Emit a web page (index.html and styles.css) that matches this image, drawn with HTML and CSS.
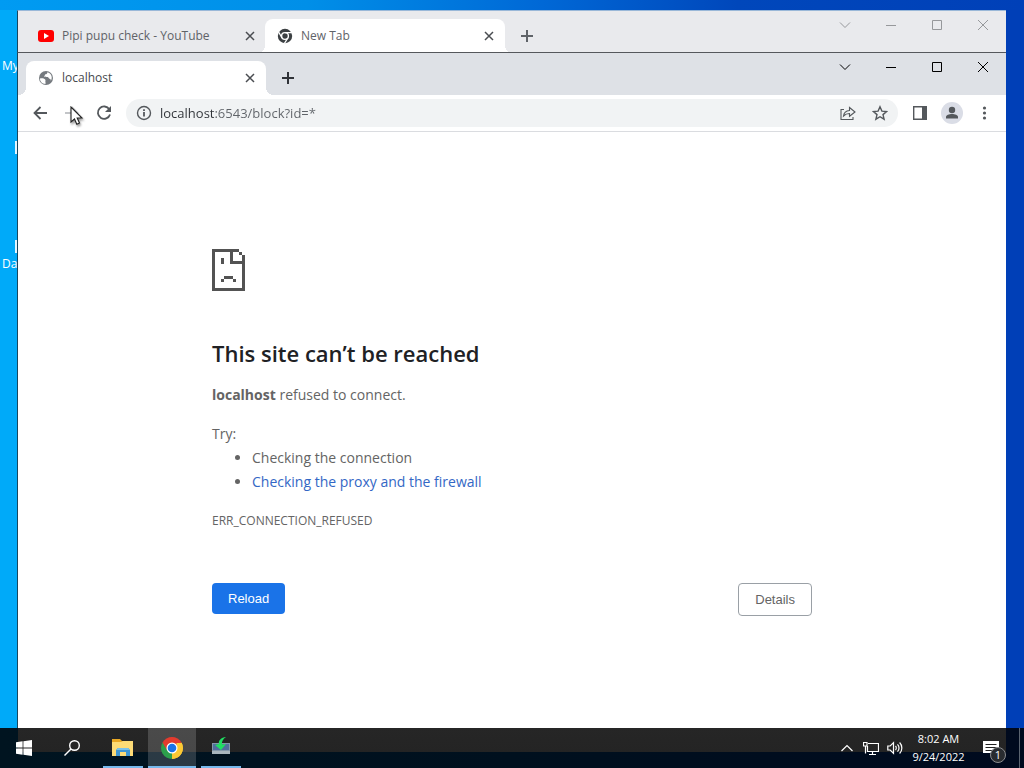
FILE: index.html
```html
<!DOCTYPE html>
<html lang="en">
<head>
<meta charset="utf-8">
<title>localhost</title>
<link rel="stylesheet" href="styles.css">
</head>
<body>
<div class="desktop">
  <div class="desktop-item item-my"><span class="desktop-label">My</span></div>
  <div class="desktop-item item-edge"><span class="shortcut"></span></div>
  <div class="desktop-item item-da"><span class="shortcut"></span><span class="desktop-label">Da</span></div>

  <section class="window window-back" aria-label="New Tab">
    <div class="tabstrip">
      <div class="tab">
        <svg class="favicon" viewBox="0 0 16 16"><rect y="2" width="16" height="12" rx="3" fill="#f00"/><path d="M6 5v6l5-3z" fill="#fff"/></svg>
        <span class="tab-title">Pipi pupu check - YouTube</span>
        <button class="tab-close" aria-label="Close tab"><svg viewBox="0 0 10 10"><path d="M1 1l8 8M9 1l-8 8"/></svg></button>
      </div>
      <div class="tab tab-active">
        <svg class="favicon" viewBox="0 0 16 16"><circle cx="8" cy="8" r="7.2" fill="#3c4043"/><circle cx="8" cy="8" r="3.4" fill="#3c4043" stroke="#fff" stroke-width="1.4"/><path d="M8 4.600h7M5 9.800L1.600 4M10.800 10L7.300 15.600" stroke="#fff" stroke-width="1.300"/></svg>
        <span class="tab-title">New Tab</span>
        <button class="tab-close" aria-label="Close tab"><svg viewBox="0 0 10 10"><path d="M1 1l8 8M9 1l-8 8"/></svg></button>
      </div>
      <button class="new-tab" aria-label="New tab"><svg viewBox="0 0 12 12"><path d="M6 0v12M0 6h12"/></svg></button>
      <div class="controls">
        <button aria-label="Search tabs"><svg viewBox="0 0 12 12"><path d="M1 3.500l5 5 5-5"/></svg></button>
        <button aria-label="Minimize"><svg viewBox="0 0 12 12"><path d="M1 6.500h10"/></svg></button>
        <button aria-label="Maximize"><svg viewBox="0 0 12 12"><path d="M1.500 1.500h9v9h-9z"/></svg></button>
        <button aria-label="Close"><svg viewBox="0 0 12 12"><path d="M1 1l10 10M11 1L1 11"/></svg></button>
      </div>
    </div>
  </section>

  <section class="window window-front" aria-label="localhost">
    <div class="tabstrip">
      <div class="tab tab-active">
        <svg class="favicon" viewBox="0 0 16 16"><circle cx="8" cy="8" r="7" fill="#757a7f"/><path d="M2 8.400c2-.6 4-.2 5.200 1.100.8.900-.2 1.700.3 2.700v1.700C4 13.800 1.800 11 2 8.400zM9.300 2.200c.1 1.500-.8 2-1.800 2.100-.8.100-.4 1.600-1.500 1.900.6 1 2.600.3 3.800.9 1 .5.700 1.600 2.200 1.800.8.100 1 1 .7 2C15 7.500 13.500 3.300 9.300 2.200z" fill="#fff"/></svg>
        <span class="tab-title">localhost</span>
        <button class="tab-close" aria-label="Close tab"><svg viewBox="0 0 10 10"><path d="M1 1l8 8M9 1l-8 8"/></svg></button>
      </div>
      <button class="new-tab" aria-label="New tab"><svg viewBox="0 0 12 12"><path d="M6 0v12M0 6h12"/></svg></button>
      <div class="controls">
        <button aria-label="Search tabs"><svg viewBox="0 0 12 12"><path d="M1 3.500l5 5 5-5"/></svg></button>
        <button aria-label="Minimize"><svg viewBox="0 0 12 12"><path d="M1 6.500h10"/></svg></button>
        <button aria-label="Maximize"><svg viewBox="0 0 12 12"><path d="M1.500 1.500h9v9h-9z"/></svg></button>
        <button aria-label="Close"><svg viewBox="0 0 12 12"><path d="M1 1l10 10M11 1L1 11"/></svg></button>
      </div>
    </div>

    <div class="toolbar">
      <button class="tool" aria-label="Back"><svg viewBox="0 0 16 16"><path d="M15 8H2.500M8.500 2L2.500 8l6 6"/></svg></button>
      <button class="tool tool-disabled" aria-label="Forward" disabled><svg viewBox="0 0 16 16"><path d="M1 8h12.500M7.500 2l6 6-6 6"/></svg></button>
      <button class="tool" aria-label="Reload page"><svg viewBox="0 0 16 16"><path d="M13.300 4.300A6.200 6.200 0 1 0 14 9.500"/><path d="M15 1v6H9z" class="solid"/></svg></button>
      <div class="omnibox">
        <button class="tool" aria-label="Site information"><svg viewBox="0 0 16 16"><circle cx="8" cy="8" r="6.500" class="thin"/><path d="M8 7v4.500M8 4.300v1.600"/></svg></button>
        <input class="url" type="text" aria-label="Address" value="localhost:6543/block?id=*">
        <button class="tool" aria-label="Share"><svg viewBox="0 0 16 16"><path class="fine" d="M4 4.500H1v10h12V12M3.500 11c.4-3.300 2.300-5.200 6-5.500V2.500L15 7l-5.500 4.300V8.500c-2.500 0-4.400.8-6 2.500z"/></svg></button>
        <button class="tool" aria-label="Bookmark this tab"><svg viewBox="0 0 16 16"><path class="thin" d="M8 1.800l1.900 4.300 4.700.4-3.600 3.100 1.100 4.600L8 11.700l-4.100 2.500L5 9.600 1.400 6.500l4.700-.4z"/></svg></button>
      </div>
      <button class="tool" aria-label="Side panel"><svg viewBox="0 0 16 16"><path class="thin" d="M1.700 1.700h12.600v12.600H1.700z"/><path class="solid" d="M10 1h5v14h-5z"/></svg></button>
      <button class="tool avatar" aria-label="Profile"><svg viewBox="0 0 16 16"><circle class="solid" cx="8" cy="5" r="3.200"/><path class="solid" d="M2 13.500V12c0-4 12-4 12 0v1.500z"/></svg></button>
      <button class="tool" aria-label="Menu"><svg viewBox="0 0 16 16"><circle class="solid" cx="8.500" cy="3" r="1.600"/><circle class="solid" cx="8.500" cy="8" r="1.600"/><circle class="solid" cx="8.500" cy="13" r="1.600"/></svg></button>
    </div>

    <main class="page">
      <div class="error">
        <svg class="error-icon" viewBox="0 0 11 14" shape-rendering="crispEdges" aria-hidden="true"><path fill="#535353" d="M0 0h9v1H1v12h9V5H6V1h1v3h3V2h1v12H0zM9 1h1v1H9zM3 3h1v2H3zM4 9h3v1H4zM3 10h1v1H3zM7 10h1v1H7z"/></svg>
        <h1>This site can’t be reached</h1>
        <p><strong>localhost</strong> refused to connect.</p>
        <div class="suggestions">
          <p>Try:</p>
          <ul>
            <li>Checking the connection</li>
            <li><a href="#buttons">Checking the proxy and the firewall</a></li>
          </ul>
        </div>
        <div class="error-code">ERR_CONNECTION_REFUSED</div>
        <div class="buttons" id="buttons">
          <button class="reload">Reload</button>
          <button class="details">Details</button>
        </div>
      </div>
    </main>
  </section>

  <svg class="cursor" viewBox="0 0 14 20" aria-hidden="true"><path d="M1 1v15l3.500-3 2.300 5.200 2.700-1.200-2.300-5h4.800z" fill="#fff" stroke="#222" stroke-width="1.100"/></svg>
</div>

<footer class="taskbar">
  <button class="task" aria-label="Start"><svg class="icon-16" viewBox="0 0 16 16"><path fill="#fff" d="M0 2.200L6.600 1.300v6.300H0zM7.400 1.200L16 0v7.600H7.400zM0 8.400h6.600v6.300L0 13.800zM7.400 8.400H16V16l-8.600-1.200z"/></svg></button>
  <button class="task" aria-label="Search"><svg class="icon-16" viewBox="0 0 16 16"><g fill="none" stroke="#fff" stroke-width="1.400"><circle cx="10.500" cy="5.500" r="4.800"/><path d="M7 9L.5 15.500"/></g></svg></button>
  <div class="apps">
    <button class="task task-open" aria-label="File Explorer"><svg class="icon-24" viewBox="0 0 24 24"><path fill="#e9a825" d="M1 3h8l2 2h11v15H1z"/><path fill="#fddb76" d="M1 6h9l2-1h10v15H1z"/><path fill="#3f96d2" d="M5 20v-6l2-2h10l2 2v6h-4v-4H9v4z"/><path fill="#7ac1ea" d="M7 12h10l2 2H5z"/></svg></button>
    <button class="task task-open task-current" aria-label="Google Chrome"><svg class="icon-24" viewBox="0 0 24 24"><path fill="#e33b2e" d="M12 12L2.500 6.500a11 11 0 0 1 19 0z"/><path fill="#fcc934" d="M12 12l9.500-5.500A11 11 0 0 1 12 23z"/><path fill="#2c9f4b" d="M12 12v11A11 11 0 0 1 2.500 6.500z"/><path fill="#e33b2e" d="M7.200 14.500L2.500 6.500 12 6.500h9.500L12 7z"/><path fill="#fcc934" d="M16.500 7h5.200A11 11 0 0 1 12 23l4.500-8z"/><circle cx="12" cy="12" r="5.500" fill="#fff"/><circle cx="12" cy="12" r="4.300" fill="#1a73e8"/></svg></button>
    <button class="task task-open" aria-label="Network transfer"><svg class="icon-24" viewBox="0 0 24 24"><path fill="#8398aa" d="M3 7h18v11H3z"/><path fill="#526d9d" d="M4 8h16v6H4z"/><path fill="#a9b6be" d="M3 15h18v3H3z"/><path fill="#20df62" d="M17 1c-5 0-8 4-7 7l-4 1 6 5 5-6-4 .5C12.500 5.500 14 3 17 1z"/></svg></button>
  </div>
  <div class="tray">
    <button class="tray-button" aria-label="Show hidden icons"><svg class="icon-16" viewBox="0 0 16 16"><path d="M2.500 11L8 5.500l5.500 5.500"/></svg></button>
    <button class="tray-button" aria-label="Network"><svg class="icon-16" viewBox="0 0 16 16"><path d="M5 3.500h10.500v8H4.500V6M.5 2.500H4V6H.5zM2.500 6v7.500M9.500 11.500v3M6 14.500h7"/></svg></button>
    <button class="tray-button" aria-label="Volume"><svg class="icon-16" viewBox="0 0 16 16"><path d="M.8 6h2.400l3.300-3.300v10.600L3.200 10H.8zM8.500 6c1 1 1 3 0 4M10.500 4.300c2 2 2 5.400 0 7.400M12.600 2.500c3 3 3 8 0 11"/></svg></button>
    <div class="clock"><time>8:02 AM</time><time>9/24/2022</time></div>
    <button class="notify" aria-label="Notifications"><svg class="icon-16" viewBox="0 0 16 16"><path fill="#fff" d="M0 1h16v12h-3v3l-4-3H0z"/><path stroke="#222" d="M2.500 4.500h11M2.500 7.500h11M2.500 10.500h7"/></svg><span class="badge">1</span></button>
    <button class="show-desktop" aria-label="Show desktop"></button>
  </div>
</footer>
</body>
</html>
```

FILE: styles.css
```css
* { box-sizing: border-box; }

body {
  margin: 0;
  height: 100vh;
  overflow: hidden;
  font-family: "Open Sans", "Noto Sans", sans-serif;
  font-size: 12px;
  color: #5f6368;
}

button {
  margin: 0;
  padding: 0;
  border: 0;
  background: none;
  color: inherit;
  font: inherit;
}

svg { display: block; flex: none; }

.desktop {
  position: relative;
  height: 100%;
  overflow: hidden;
  background:
    linear-gradient(to right, #009bf2 0, #008fe8 30%, #0068d6 53%, #0047bb 72%, #0040b8 100%) top / 100% 10px no-repeat,
    linear-gradient(to right, #00aaf9 0, #00aaf9 50%, #003fb7 51%, #003fb7 100%);
}

/* Desktop shortcuts, mostly hidden behind the windows */
.desktop-item { position: absolute; left: 2px; color: #fff; }
.desktop-label { display: block; line-height: 16px; }
.shortcut { display: block; width: 20px; height: 13px; margin-left: 13px; background: #e4f6ff; }
.item-my { top: 58px; }
.item-edge { top: 141px; }
.item-da { top: 240px; }
.item-da .desktop-label { margin-top: 3px; }

/* Windows */
.window {
  position: absolute;
  left: 17px;
  right: 18px;
  bottom: 16px;
  display: flex;
  flex-direction: column;
  border-left: 1px solid #17465f;
  background: #fff;
}
.window-back { top: 10px; border-top: 1px solid #9ab8d8; }
.window-front { top: 52px; border-top: 1px solid #55585c; }

.tabstrip {
  display: flex;
  align-items: flex-end;
  height: 42px;
  padding-left: 8px;
  flex: none;
  background: #dee1e6;
}
.window-back .tabstrip { background: #e9eaed; }

.tab {
  position: relative;
  display: flex;
  align-items: center;
  gap: 8px;
  width: 240px;
  height: 34px;
  padding: 0 10px 0 12px;
}
.tab-active { background: #fff; border-radius: 8px 8px 0 0; }
.window-back .tab-active { margin-left: -1px; }
.tab-active::before,
.tab-active::after {
  content: "";
  position: absolute;
  bottom: 0;
  width: 8px;
  height: 8px;
}
.tab-active::before { right: 100%; background: radial-gradient(circle at 0 0, transparent 8px, #fff 8px); }
.tab-active::after { left: 100%; background: radial-gradient(circle at 100% 0, transparent 8px, #fff 8px); }

.favicon { width: 16px; height: 16px; }
.tab-title { flex: 1; white-space: nowrap; line-height: 16px; }
.window-front .tab-title { color: #45494d; }
.tab-close { display: grid; place-items: center; width: 12px; height: 16px; }
.tab-close svg { width: 10px; height: 10px; stroke: #4a4d51; stroke-width: 1.5; }
.new-tab { display: grid; place-items: center; width: 28px; height: 34px; margin-left: 8px; }
.new-tab svg { width: 12px; height: 12px; stroke: #5f6368; stroke-width: 2; }
.window-front .new-tab svg { stroke: #303338; }

.controls { display: flex; align-self: flex-start; margin-left: auto; }
.controls button { display: grid; place-items: center; width: 46px; height: 28px; }
.controls svg { width: 12px; height: 12px; fill: none; stroke: #000; stroke-width: 1; }
.window-back .controls svg { stroke: #96989b; }

/* Toolbar */
.toolbar {
  display: flex;
  align-items: center;
  gap: 4px;
  height: 37px;
  padding: 0 8px;
  flex: none;
  border-bottom: 1px solid #dadce0;
}
.tool { display: grid; place-items: center; width: 28px; height: 28px; flex: none; border-radius: 14px; }
.tool svg { width: 16px; height: 16px; fill: none; stroke: #54585c; stroke-width: 1.8; }
.tool .thin { stroke-width: 1.4; }
.tool .fine { stroke-width: 1.1; }
.tool .solid { fill: #54585c; stroke: none; }
.tool-disabled svg { stroke: #c3c5c8; }
.omnibox {
  display: flex;
  align-items: center;
  gap: 4px;
  flex: 1;
  min-width: 0;
  height: 28px;
  margin: 0 4px;
  padding: 0 4px;
  border-radius: 14px;
  background: #f1f3f4;
}
.omnibox .url {
  flex: 1;
  min-width: 0;
  height: 20px;
  padding: 0;
  margin-left: -2px;
  border: 0;
  outline: 0;
  font: 13px/20px "Open Sans", "Noto Sans", sans-serif;
  background: linear-gradient(to right, #303338 54px, #5f6368 54px);
  background-clip: text;
  -webkit-background-clip: text;
  color: transparent;
}
.avatar { width: 22px; height: 22px; margin: 0 3px; background: #dadde6; }
.avatar svg { width: 16px; height: 16px; }

/* Error page */
.page { flex: 1; min-height: 0; padding: 117px 24px 0; overflow: hidden; font-size: 14px; line-height: 24px; color: #646464; }
.error { max-width: 600px; margin: 0 auto; }
.error-icon { width: 33px; height: 42px; }
.error h1 { margin: 46px 0 14px; font-size: 22px; font-weight: 600; line-height: 32px; color: #202124; }
.error p { margin: 0; }
.suggestions { margin-top: 15px; }
.suggestions ul { margin: 0; padding-left: 40px; }
.suggestions a { color: #3367c5; text-decoration: none; }
.error-code { margin-top: 15px; font-size: 12px; }
.buttons { display: flex; justify-content: space-between; align-items: flex-start; margin-top: 50px; font: 13px/16px "Liberation Sans", Arial, sans-serif; }
.buttons button { border-radius: 4px; }
.reload { padding: 8px 16px 7px; color: #fff; background: #1a73e8; }
.buttons .details { padding: 8px 16px 7px; border: 1px solid #9aa0a6; }

.cursor { position: absolute; left: 70px; top: 106px; width: 14px; height: 20px; filter: drop-shadow(1px 2px 1px #0006); }

/* Taskbar, tinted by the window that lies behind it */
.taskbar {
  position: absolute;
  left: 0;
  right: 0;
  bottom: 0;
  display: flex;
  height: 40px;
  background:
    linear-gradient(#262626, #242424) 18px 0 / calc(100% - 36px) 24px no-repeat,
    linear-gradient(to right, #001420, #00101e 50%, #000a1e);
  color: #fff;
}
.task { display: grid; place-items: center; width: 48px; height: 40px; }
.apps { display: flex; gap: 1px; margin-left: 3px; }
.task-open { position: relative; }
.task-open::after { content: ""; position: absolute; left: 4px; right: 4px; bottom: 0; height: 2px; background: #76b9ed; }
.task-current { background: #ffffff2b; }
.task-current::after { left: 0; right: 0; }
.icon-16 { width: 16px; height: 16px; }
.icon-24 { width: 24px; height: 24px; }
.tray { display: flex; align-items: center; margin-left: auto; }
.tray-button { display: grid; place-items: center; width: 24px; height: 40px; }
.tray-button svg { fill: none; stroke: #fff; stroke-width: 1.2; }
.clock { display: flex; flex-direction: column; align-items: center; width: 63px; font-size: 11px; line-height: 18px; white-space: nowrap; }
.notify { position: relative; display: grid; place-items: center; width: 48px; height: 40px; margin-right: 1px; padding-right: 6px; }
.badge {
  position: absolute;
  left: 20px;
  top: 19px;
  width: 16px;
  height: 16px;
  border: 1px solid #8b8d90;
  border-radius: 50%;
  background: #292c30;
  font-size: 11px;
  line-height: 14px;
  text-align: center;
}
.show-desktop { width: 5px; height: 40px; border-left: 1px solid #5b6470; }
```
